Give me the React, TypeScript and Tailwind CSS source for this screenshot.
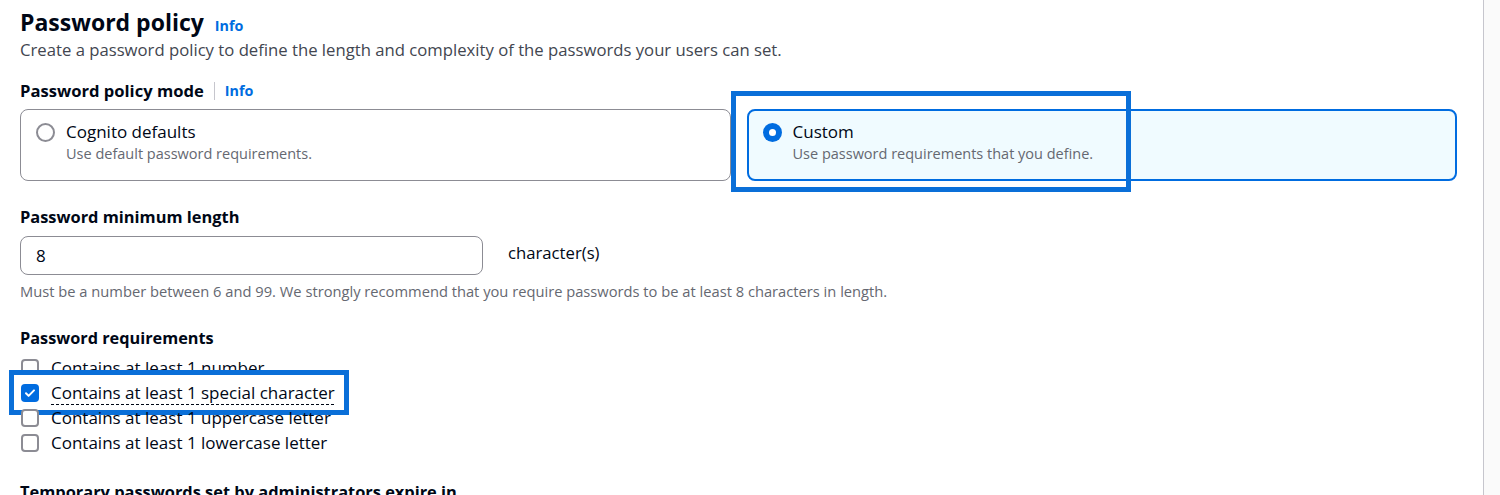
import React from 'react'

const font = "font-['Open_Sans','Noto_Sans',sans-serif]"

function InfoLink({ className = '' }: { className?: string }) {
  return <span className={`text-[14.3px] font-bold text-[#006ce0] ${className}`}>Info</span>
}

function RadioCard({ title, desc, selected }: { title: string; desc: string; selected?: boolean }) {
  return (
    <div
      className={`relative h-[72px] rounded-[8px] ${
        selected ? 'border-2 border-[#006ce0] bg-[#f0fbff] pl-[14px] pt-[10px]' : 'border border-[#8c8c94] bg-white pl-[15px] pt-[11px]'
      }`}
    >
      <div className="flex gap-[11px]">
        <div className="flex h-[22px] items-center">
          {selected ? (
            <span className="flex h-[19px] w-[19px] items-center justify-center rounded-full bg-[#006ce0]">
              <span className="h-[7px] w-[7px] rounded-full bg-white" />
            </span>
          ) : (
            <span className="h-[19px] w-[19px] rounded-full border-2 border-[#8c8c94] bg-white" />
          )}
        </div>
        <div>
          <div className="text-[17px] leading-[22px] text-[#000716]">{title}</div>
          <div className="text-[14.5px] leading-[22px] text-[#656871]">{desc}</div>
        </div>
      </div>
      {selected && (
        <div className="pointer-events-none absolute left-[-18px] top-[-20px] h-[101px] w-[400px] border-[5px] border-[#0a6fd8]" />
      )}
    </div>
  )
}

function Check({ label, checked }: { label: string; checked?: boolean }) {
  return (
    <div className="relative flex h-[25px] items-center gap-[12px]">
      {checked && (
        <div className="absolute left-[-11px] top-[-10px] h-[45px] w-[340px] border-[5px] border-[#0a6fd8] bg-white" />
      )}
      {checked ? (
        <span className="relative ml-px flex h-[18px] w-[18px] items-center justify-center rounded-[4px] bg-[#006ce0]">
          <svg width="12" height="12" viewBox="0 0 12 12" fill="none">
            <path d="M2 6.3l2.6 2.6L10 3.4" stroke="white" strokeWidth="2" strokeLinecap="round" strokeLinejoin="round" />
          </svg>
        </span>
      ) : (
        <span className="ml-px h-[18px] w-[18px] rounded-[4px] border-2 border-[#8c8c94] bg-white" />
      )}
      <span
        className={`relative text-[17px] leading-[22px] text-[#000716] ${
          checked ? 'underline decoration-dashed decoration-1 underline-offset-[5px]' : ''
        }`}
      >
        {label}
      </span>
    </div>
  )
}

export default function App() {
  return (
    <div className={`flex h-[495px] w-full overflow-hidden bg-white ${font}`}>
      <div className="flex-1 pl-5 pr-[26px] pt-2">
        <div className="flex h-[28px] items-baseline gap-[11px]">
          <h1 className="text-[23px] font-bold leading-[28px] text-[#000716]">Password policy</h1>
          <InfoLink />
        </div>
        <p className="mt-[3px] text-[16.7px] leading-[22px] text-[#424650]">
          Create a password policy to define the length and complexity of the passwords your users can set.
        </p>

        <div className="mt-[19px] flex h-[22px] items-center">
          <span className="text-[16.6px] font-bold leading-[22px] text-[#000716]">Password policy mode</span>
          <span className="mx-[10px] h-[18px] w-px bg-[#c6c6cd]" />
          <InfoLink />
        </div>
        <div className="mt-[7px] grid grid-cols-2 gap-[16px]">
          <RadioCard title="Cognito defaults" desc="Use default password requirements." />
          <RadioCard title="Custom" desc="Use password requirements that you define." selected />
        </div>

        <div className="mt-[25px] text-[16.4px] font-bold leading-[22px] text-[#000716]">Password minimum length</div>
        <div className="mt-[8px] flex items-start gap-[25px]">
          <div className="flex h-[39px] w-[463px] items-center rounded-[8px] border border-[#8c8c94] px-[15px] text-[17px] text-[#000716]">
            8
          </div>
          <span className="mt-[6px] text-[16.7px] leading-[22px] text-[#000716]">character(s)</span>
        </div>
        <p className="mt-[7px] text-[14.7px] leading-[18px] text-[#656871]">
          Must be a number between 6 and 99. We strongly recommend that you require passwords to be at least 8 characters in length.
        </p>

        <div className="mt-[27px] text-[16.3px] font-bold leading-[22px] text-[#000716]">Password requirements</div>
        <div className="mt-[6px] flex flex-col">
          <Check label="Contains at least 1 number" />
          <Check label="Contains at least 1 special character" checked />
          <Check label="Contains at least 1 uppercase letter" />
          <Check label="Contains at least 1 lowercase letter" />
        </div>

        <div className="mt-[26px] text-[16.4px] font-bold leading-[22px] text-[#000716]">
          Temporary passwords set by administrators expire in
        </div>
      </div>
      <div className="w-[17px] shrink-0 border-l border-[#c6c6cd] bg-[#fafafa]" />
    </div>
  )
}
